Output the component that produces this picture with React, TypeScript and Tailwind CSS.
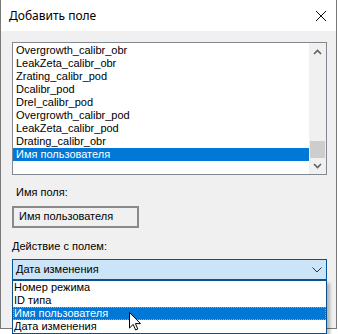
import React from "react";

const items = [
  "Overgrowth_calibr_obr",
  "LeakZeta_calibr_obr",
  "Zrating_calibr_pod",
  "Dcalibr_pod",
  "Drel_calibr_pod",
  "Overgrowth_calibr_pod",
  "LeakZeta_calibr_pod",
  "Drating_calibr_obr",
  "Имя пользователя",
];

const options = ["Номер режима", "ID типа", "Имя пользователя", "Дата изменения"];

const body = { fontFamily: '"Liberation Sans", Arial, sans-serif' };
const title = { fontFamily: '"Noto Sans", "Open Sans", sans-serif' };

export default function App() {
  return (
    <div className="w-[338px] h-[334px] bg-white relative overflow-hidden text-[11px] text-black" style={body}>
      <div className="w-[337px] h-[329px] border border-t-0 border-[#7a7a7a] flex flex-col">
        <div className="h-[31px] bg-white flex items-center justify-between pl-[8px] pr-[9px]">
          <span className="text-[12px] leading-[13px]" style={title}>Добавить поле</span>
          <svg width="12" height="12" viewBox="0 0 12 12">
            <path d="M1 1L11 11M11 1L1 11" stroke="#111" strokeWidth="1" />
          </svg>
        </div>
        <div className="flex-1 bg-[#f0f0f0] pl-[11px] pr-[9px] pt-[11px] flex flex-col items-start">
          {/* Listbox */}
          <div className="w-[315px] h-[133px] border border-[#828790] bg-white flex">
            <div className="flex-1 pt-[1px]">
              {items.map((it, i) => (
                <div
                  key={i}
                  className={
                    "h-[13px] leading-[13px] pl-[3px] whitespace-nowrap " +
                    (i === items.length - 1 ? "bg-[#0078d7] text-white" : "")
                  }
                >
                  {it}
                </div>
              ))}
            </div>
            <div className="w-[17px] bg-[#f0f0f0] flex flex-col">
              <div className="h-[17px] flex items-center justify-center">
                <svg width="9" height="6" viewBox="0 0 9 6">
                  <path d="M1 5L4.5 1.5L8 5" stroke="#606060" strokeWidth="1.6" fill="none" />
                </svg>
              </div>
              <div className="flex-1 flex flex-col justify-end">
                <div className="h-[17px] mx-[1px] bg-[#cdcdcd]" />
              </div>
              <div className="h-[16px] flex items-center justify-center">
                <svg width="9" height="6" viewBox="0 0 9 6">
                  <path d="M1 1L4.5 4.5L8 1" stroke="#606060" strokeWidth="1.6" fill="none" />
                </svg>
              </div>
            </div>
          </div>

          <div className="mt-[11px] pl-[4px] leading-[13px]">Имя поля:</div>

          <div className="mt-[7px] w-[127px] h-[22px] border-2 border-[#8a8a8a] pl-[5px] pt-[2px] leading-[13px]">
            Имя пользователя
          </div>

          <div className="mt-[12px] leading-[13px]">Действие с полем:</div>

          {/* Combobox */}
          <div className="mt-[6px] relative w-[315px]">
            <div className="h-[21px] border border-[#005499] bg-[#cce4f7] flex items-center justify-between pl-[3px] pr-[4px]">
              <span className="leading-[13px]">Дата изменения</span>
              <svg width="10" height="6" viewBox="0 0 10 6">
                <path d="M0.5 0.5L5 5L9.5 0.5" stroke="#333" strokeWidth="1" fill="none" />
              </svg>
            </div>
            <div className="absolute left-0 top-[21px] w-[315px] border border-[#0b4f8c] bg-white shadow-[3px_3px_3px_rgba(0,0,0,0.25)] z-10">
              {options.map((o, i) => (
                <div
                  key={i}
                  className={
                    "h-[13px] leading-[13px] pl-[1px] whitespace-nowrap " +
                    (i === 2 ? "bg-[#0078d7] text-white outline outline-1 outline-dotted outline-[#e8953a] -outline-offset-1" : "")
                  }
                >
                  {o}
                </div>
              ))}
            </div>
          </div>
        </div>
      </div>
      {/* mouse cursor */}
      <svg className="absolute left-[129px] top-[312px] z-20" width="12" height="19" viewBox="0 0 12 19">
        <path d="M0.5 0.5V16L4.2 12.4L6.6 18L8.8 17L6.4 11.6H11.5Z" fill="white" stroke="black" strokeWidth="1" strokeLinejoin="round" />
      </svg>
    </div>
  );
}
